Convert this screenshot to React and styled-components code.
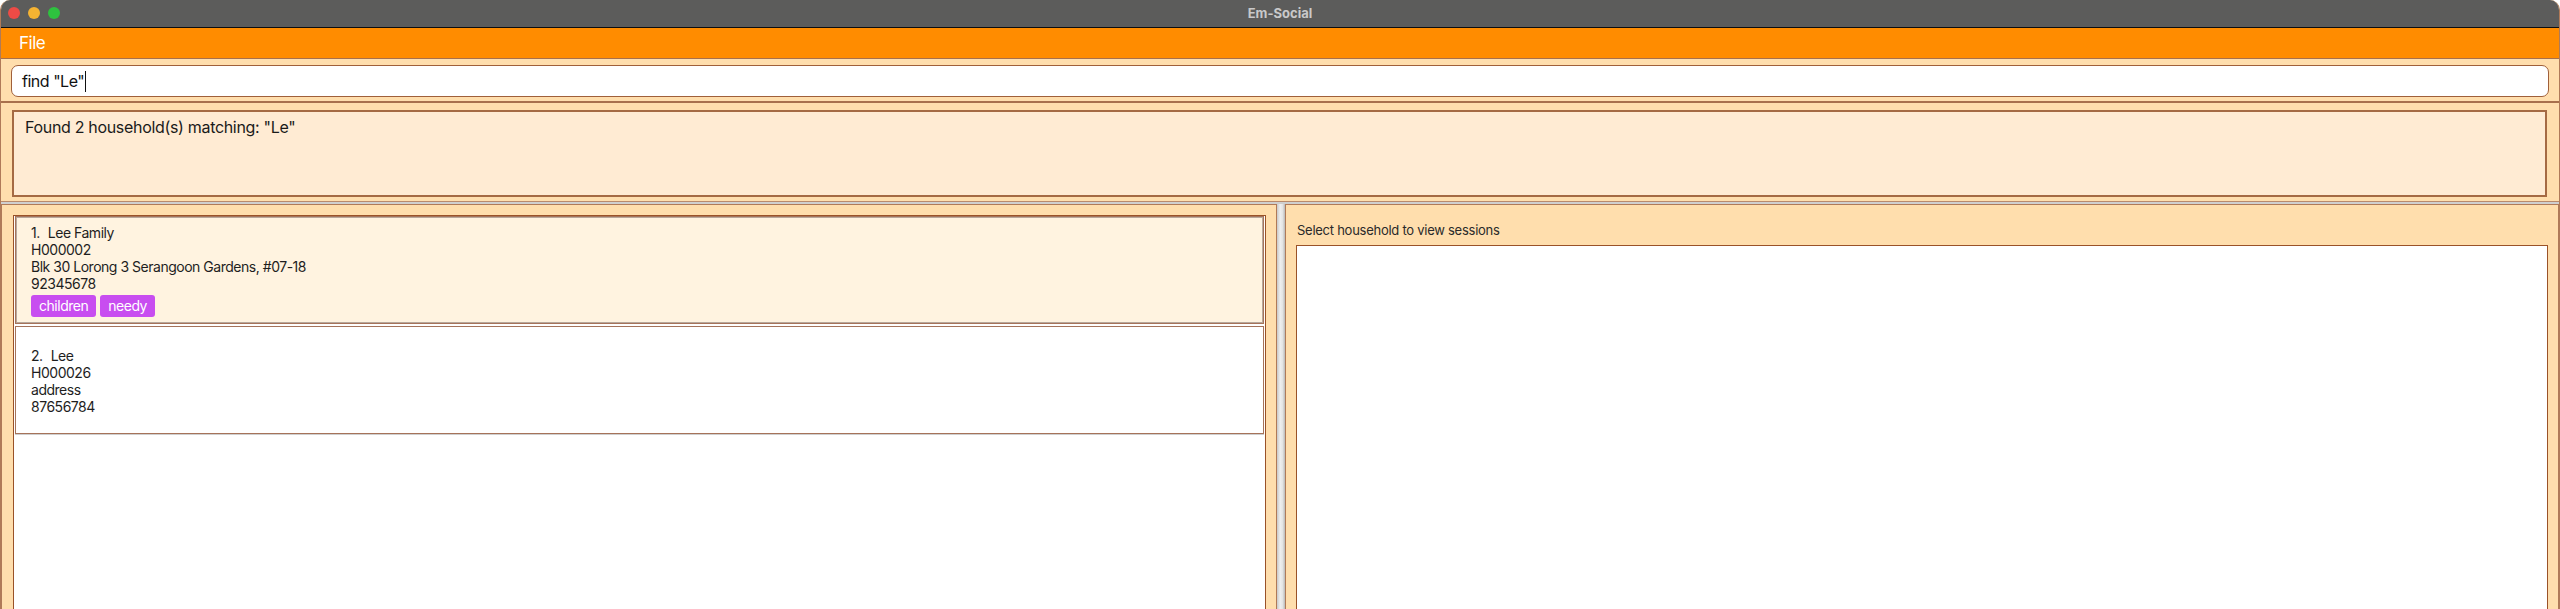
import React from "react";
import styled, { createGlobalStyle } from "styled-components";

const Global = createGlobalStyle`
  html, body { margin: 0; padding: 0; background: #ffffff; }
  body { font-family: Inter, "Noto Sans", "Liberation Sans", sans-serif; letter-spacing: -0.03em; }
  * { box-sizing: border-box; }
`;

const Window = styled.div`
  width: 2560px;
  height: 609px;
  display: flex;
  flex-direction: column;
  overflow: hidden;
  background: #ffdead;
  border-radius: 10px 10px 0 0;
  border-left: 1px solid #b07a58;
  border-right: 1px solid #b07a58;
`;

const TitleBar = styled.div`
  height: 28px;
  flex: none;
  background: #5c5c5b;
  border-bottom: 1px solid #0d0d0d;
  display: flex;
  align-items: center;
  justify-content: center;
  position: relative;
`;

const Lights = styled.div`
  position: absolute;
  left: 7px;
  top: 7px;
  display: flex;
  gap: 8px;
`;

const Light = styled.span`
  width: 12px;
  height: 12px;
  border-radius: 50%;
  background: ${(p) => p.$c};
`;

const Title = styled.span`
  font-size: 13px;
  font-weight: 700;
  color: #c9c9c9;
  margin-top: -1px;
  letter-spacing: 0;
`;

const MenuBar = styled.div`
  height: 31px;
  flex: none;
  background: #ff8c00;
  border-bottom: 1px solid #a8704c;
  display: flex;
  align-items: center;
  padding-left: 18px;
`;

const MenuItem = styled.span`
  color: #ffffff;
  font-size: 17px;
`;

const CommandPane = styled.div`
  flex: none;
  padding: 6px 10px 4px 10px;
  border-bottom: 2px solid #a8704c;
`;

const CommandInput = styled.div`
  height: 32px;
  background: #ffffff;
  border: 1px solid #a0603a;
  border-radius: 7px;
  display: flex;
  align-items: center;
  padding-left: 10px;
  font-size: 16px;
  color: #111;
`;

const Caret = styled.span`
  display: inline-block;
  width: 1px;
  height: 21px;
  background: #111;
  margin-left: 1px;
`;

const ResultPane = styled.div`
  flex: none;
  padding: 7px 12px 4px 11px;
  border-bottom: 1px solid #b98a6c;
`;

const ResultBox = styled.div`
  height: 87px;
  background: #ffebd3;
  border: 2px solid #a56a43;
  padding: 5px 11px;
  font-size: 16px;
  letter-spacing: -0.02em;
  color: #1a1a1a;
`;

const Split = styled.div`
  flex: 1;
  display: flex;
  min-height: 0;
  border-top: 2px solid #cfcfcf;
`;

const LeftPane = styled.div`
  width: 1276px;
  flex: none;
  display: flex;
  flex-direction: column;
  padding: 10px 10px 0 11px;
  border: 1px solid #b07a58;
  border-bottom: none;
`;

const List = styled.div`
  flex: 1;
  background: #ffffff;
  border: 1px solid #9a5228;
  border-bottom: none;
  display: flex;
  flex-direction: column;
  gap: 2px;
  padding: 0 1px;
`;

const Card = styled.div`
  height: 108px;
  border: 1px solid #a6735a;
  box-shadow: ${(p) => (p.$selected ? "inset 0 0 0 1px #b8a89c" : "0 1px 0 #cfcfcf")};
  background: ${(p) => (p.$selected ? "#fff3e0" : "#ffffff")};
  display: flex;
  flex-direction: column;
  justify-content: center;
  padding: 1px 15px 0;
  font-size: 14px;
  line-height: 17px;
  color: #1e1e1e;
`;

const NameRow = styled.div`
  display: flex;
  gap: 8px;
`;

const Tags = styled.div`
  display: flex;
  gap: 4px;
  margin-top: 3px;
`;

const Tag = styled.span`
  background: #c84df0;
  color: #ffffff;
  border-radius: 3px;
  height: 22px;
  line-height: 22px;
  padding: 0 8px;
  font-size: 14px;
`;

const Divider = styled.div`
  width: 8px;
  flex: none;
  background: linear-gradient(to right, #c9c9c9, #efefef 40%, #e4e4e4 70%, #b9b9b9);
`;

const RightPane = styled.div`
  flex: 1;
  display: flex;
  flex-direction: column;
  padding: 8px 10px 0 10px;
  border: 1px solid #b07a58;
  border-bottom: none;
`;

const RightLabel = styled.div`
  font-size: 13px;
  letter-spacing: -0.02em;
  color: #2a2a2a;
  height: 32px;
  display: flex;
  align-items: center;
  padding-left: 1px;
  padding-top: 1px;
`;

const SessionBox = styled.div`
  flex: 1;
  background: #ffffff;
  border: 1px solid #9a5228;
  border-bottom: none;
`;

const households = [
  {
    idx: 1,
    name: "Lee Family",
    id: "H000002",
    address: "Blk 30 Lorong 3 Serangoon Gardens, #07-18",
    phone: "92345678",
    tags: ["children", "needy"],
    selected: true,
  },
  {
    idx: 2,
    name: "Lee",
    id: "H000026",
    address: "address",
    phone: "87656784",
    tags: [],
    selected: false,
  },
];

export default function App() {
  return (
    <>
      <Global />
      <Window>
        <TitleBar>
          <Lights>
            <Light $c="#ed4b46" />
            <Light $c="#f5b332" />
            <Light $c="#2ec23f" />
          </Lights>
          <Title>Em-Social</Title>
        </TitleBar>
        <MenuBar>
          <MenuItem>File</MenuItem>
        </MenuBar>
        <CommandPane>
          <CommandInput>
            find "Le"<Caret />
          </CommandInput>
        </CommandPane>
        <ResultPane>
          <ResultBox>Found 2 household(s) matching: "Le"</ResultBox>
        </ResultPane>
        <Split>
          <LeftPane>
            <List>
              {households.map((h) => (
                <Card key={h.id} $selected={h.selected}>
                  <NameRow>
                    <span>{h.idx}.</span>
                    <span>{h.name}</span>
                  </NameRow>
                  <div>{h.id}</div>
                  <div>{h.address}</div>
                  <div>{h.phone}</div>
                  {h.tags.length > 0 && (
                    <Tags>
                      {h.tags.map((t) => (
                        <Tag key={t}>{t}</Tag>
                      ))}
                    </Tags>
                  )}
                </Card>
              ))}
            </List>
          </LeftPane>
          <Divider />
          <RightPane>
            <RightLabel>Select household to view sessions</RightLabel>
            <SessionBox />
          </RightPane>
        </Split>
      </Window>
    </>
  );
}
